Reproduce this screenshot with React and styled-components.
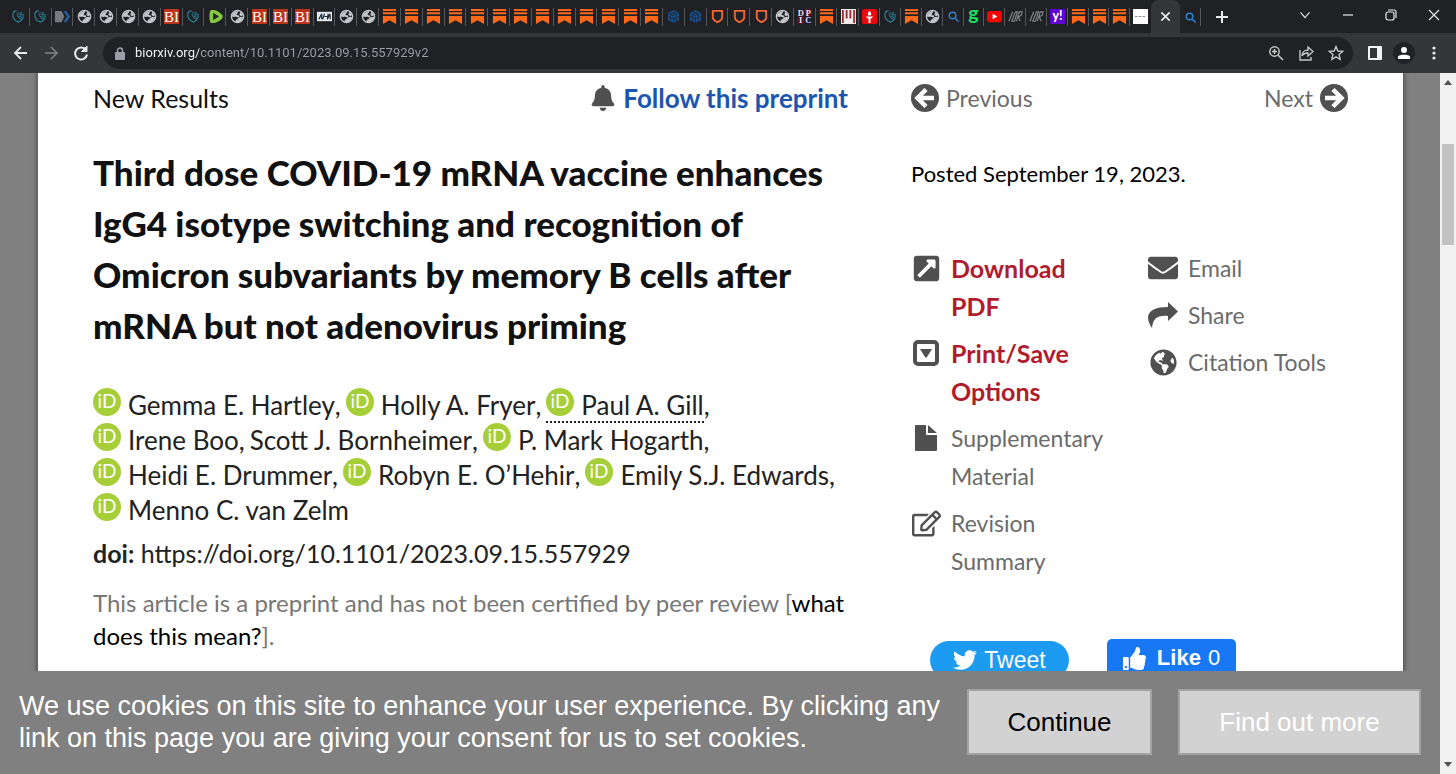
import React from "react";
import styled, { createGlobalStyle, css } from "styled-components";
import {
  FaBell,
  FaEnvelope,
  FaExternalLinkSquareAlt,
  FaGlobeAmericas,
  FaRegEdit,
  FaThumbsUp,
  FaTwitter,
} from "react-icons/fa";

const GlobalStyle = createGlobalStyle`
  * { box-sizing: border-box; }
  body { margin: 0; background: #808080; }
  button { font: inherit; border: 0; padding: 0; background: none; color: inherit; cursor: pointer; }
  a { color: inherit; text-decoration: none; }
  svg { display: block; flex: none; overflow: visible; }
`;

const humanist = `Lato, "Noto Sans", sans-serif`;
const grotesque = `"Liberation Sans", Arial, sans-serif`;

const Browser = styled.div`
  display: flex;
  flex-direction: column;
  height: 100vh;
  overflow: hidden;
  font-family: ${humanist};
`;

/* ---------- tab strip ---------- */

const TabStrip = styled.nav`
  display: flex;
  flex: none;
  height: 33px;
  padding-left: 8px;
  background: #202124;
`;

const Tab = styled.button`
  flex: ${(p) => (p.$narrow ? 21 : 22)} 1 0;
  min-width: 0;
  display: flex;
  align-items: center;
  justify-content: center;
  position: relative;
  ${(p) =>
    !p.$last &&
    css`
      &::after {
        content: "";
        position: absolute;
        right: 0;
        top: 8px;
        width: 1px;
        height: 18px;
        background: #55575b;
      }
    `}
`;

const StripEnd = styled.div`
  display: flex;
  flex: none;
  width: 305px;
`;

const ActiveTab = styled.button`
  display: flex;
  align-items: center;
  justify-content: center;
  width: 29px;
  border-radius: 8px 8px 0 0;
  background: #35363a;
`;

const StripButton = styled.button`
  display: flex;
  align-items: center;
  justify-content: center;
  width: ${(p) => p.$width}px;
  ${(p) => p.$divided && "border-right: 1px solid #55575b; height: 18px; margin-top: 8px;"}
`;

const WindowButtons = styled.div`
  display: flex;
  margin-left: auto;
  padding-bottom: 4px;
`;

/* ---------- toolbar ---------- */

const Toolbar = styled.div`
  display: flex;
  flex: none;
  align-items: center;
  height: 40px;
  padding: 0 11px 0 12px;
  background: #35363a;
`;

const NavButtons = styled.div`
  display: flex;
  gap: 12px;
  margin-right: 13px;
`;

const IconButton = styled.button`
  display: flex;
  align-items: center;
  justify-content: center;
  width: ${(p) => p.$width || 18}px;
  height: 24px;
`;

const AddressBar = styled.label`
  display: flex;
  align-items: center;
  flex: 1;
  gap: 10px;
  height: 32px;
  padding: 0 8px 0 12px;
  border-radius: 16px;
  background: #202124;
`;

const AddressInput = styled.input`
  flex: 1;
  min-width: 0;
  padding: 0;
  border: 0;
  outline: 0;
  font: 13px/20px Roboto, sans-serif;
  color: transparent;
  background: linear-gradient(to right, #fff 64px, #9aa0a6 64px);
  background-clip: text;
  -webkit-background-clip: text;
`;

const AddressActions = styled.div`
  display: flex;
  gap: 12px;
`;

const ToolbarActions = styled.div`
  display: flex;
  align-items: center;
  gap: 8px;
  margin-left: 12px;
`;

const Avatar = styled.button`
  display: flex;
  align-items: center;
  justify-content: center;
  width: 22px;
  height: 22px;
  border-radius: 50%;
  background: #202124;
`;

/* ---------- window content ---------- */

const Content = styled.div`
  display: flex;
  flex: 1;
  min-height: 0;
`;

const Document = styled.div`
  display: flex;
  flex-direction: column;
  flex: 1;
  min-width: 0;
  background: #808080;
`;

const PageArea = styled.div`
  flex: 1;
  min-height: 0;
  overflow: hidden;
  padding: 0 37px 0 38px;
`;

const Page = styled.main`
  display: grid;
  grid-template-columns: minmax(0, 763fr) minmax(0, 437fr);
  column-gap: 55px;
  min-height: 100%;
  padding: 0 55px;
  background: #fff;
  box-shadow: 0 0 5px 1px #4a4a4a;
`;

const Scrollbar = styled.div`
  display: flex;
  flex-direction: column;
  align-items: center;
  justify-content: space-between;
  flex: none;
  width: 16px;
  padding: 7px 0;
  background: #f1f1f1;
`;

const Thumb = styled.div`
  width: 12px;
  height: 101px;
  margin: 59px 0 auto;
  background: #c1c1c1;
`;

const TopRow = styled.div`
  display: flex;
  align-items: center;
  justify-content: space-between;
  height: 50px;
  font-size: ${(p) => (p.$muted ? 23 : 25)}px;
  line-height: 32px;
  color: ${(p) => (p.$muted ? "#6b6b6b" : "#111")};
`;

const TopLink = styled.a`
  display: flex;
  align-items: center;
  gap: 7px;
`;

const FollowLink = styled(TopLink)`
  margin-right: 8px;
  font-size: 26px;
  font-weight: 700;
  color: #1a56b0;
`;

const Title = styled.h1`
  margin: 24px 0 37px;
  font-size: 35px;
  line-height: 51px;
  font-weight: 900;
  white-space: nowrap;
  color: #111;
`;

const Authors = styled.div`
  font-size: 26px;
  line-height: 35px;
  white-space: nowrap;
  color: #222;
`;

const AuthorLine = styled.div`
  display: flex;
  gap: 5px;
  height: 35px;
`;

const AuthorEntry = styled.span`
  display: flex;
`;

const AuthorLink = styled.a`
  display: flex;
  gap: 7px;
  ${(p) => p.$dotted && "border-bottom: 2px dotted #222;"}
`;

const Doi = styled.div`
  margin-top: 8px;
  font-size: 25px;
  line-height: 35px;
  color: #222;
`;

const Notice = styled.p`
  margin: 15px 0 0;
  font-size: 24px;
  line-height: 33px;
  white-space: nowrap;
  color: #777;
`;

const NoticeLink = styled.a`
  color: #000;
`;

const Posted = styled.div`
  margin: 35px 0 59px;
  font-size: 22px;
  line-height: 32px;
  color: #000;
`;

const Tools = styled.div`
  display: grid;
  grid-template-columns: 237px minmax(0, 1fr);
`;

const ToolList = styled.ul`
  display: flex;
  flex-direction: column;
  gap: 9px;
  margin: 0;
  padding: 0;
  list-style: none;
`;

const ToolLink = styled.a`
  display: flex;
  gap: 10px;
  font-size: ${(p) => (p.$strong ? 25 : 23)}px;
  line-height: 38px;
  font-weight: ${(p) => (p.$strong ? 700 : 400)};
  color: ${(p) => (p.$strong ? "#b01c2e" : "#6b6b6b")};
`;

const ToolIcon = styled.span`
  display: flex;
  align-items: center;
  justify-content: center;
  flex: none;
  width: 30px;
  height: 38px;
  color: #505050;
`;

const Social = styled.div`
  display: flex;
  align-items: flex-start;
  gap: 38px;
  margin: 59px 0 0 19px;
  font-family: ${grotesque};
  font-size: 22px;
  color: #fff;
`;

const TweetButton = styled.button`
  display: flex;
  align-items: center;
  justify-content: center;
  gap: 7px;
  width: 139px;
  height: 38px;
  margin-top: 2px;
  border-radius: 19px;
  font-size: 23px;
  background: #1d9bf0;
`;

const LikeButton = styled.button`
  display: flex;
  align-items: center;
  justify-content: center;
  gap: 7px;
  width: 129px;
  height: 38px;
  border-radius: 5px;
  background: #1877f2;
`;

const LikeIcon = styled.span`
  margin-right: 4px;
`;

const CookieBar = styled.div`
  display: flex;
  align-items: flex-start;
  justify-content: space-between;
  flex: none;
  padding: 18px 19px 19px;
  font-family: ${grotesque};
  font-size: 26px;
  line-height: 32px;
  color: #fff;
  background: #808080;
`;

const CookieText = styled.p`
  margin: 1px 0 0;
  font-size: 27px;
  white-space: nowrap;
`;

const CookieButtons = styled.div`
  display: flex;
  gap: 26px;
`;

const CookieButton = styled.button`
  width: ${(p) => (p.$wide ? 243 : 185)}px;
  height: 66px;
  border: 2px solid #a3a3a3;
  color: ${(p) => (p.$wide ? "#fff" : "#000")};
  background: #d2d2d2;
`;

/* ---------- favicons ---------- */

const favicons = {
  teal: (
    <g fill="none" stroke="#2b8399" strokeWidth="1.200">
      <path d="M6 2C3 2 2 4 2 6c0 4 3 7 6 8 3-1 5-4 5-7" />
      <path d="M7 4h5M8 6h6M7 8h4M9 10h3M7 4c-1 2 0 4 2 6M11 3l-1 8" stroke="#236477" />
    </g>
  ),
  arrowTag: (
    <g>
      <path d="M0 2h7l3 6-3 6H0z" fill="#777b80" />
      <path d="M9 2h3l4 6-4 6H9l4-6z" fill="#2461a0" />
    </g>
  ),
  globe: (
    <g>
      <circle cx="8" cy="8" r="6.500" fill="#202124" stroke="#c3c6ca" strokeWidth="1.500" />
      <path d="M2 7c1-3 4-5 7-5 0 2-2 2-2 4 1 1 3 0 3 2-1 2-3 0-4 0C5 9 3 8 2 8zM6 14c0-2 0-3 2-3 1-2 2-3 6-2-.5 3-4 6-8 5zM11 3l3 3-2 2-2-2z" fill="#c3c6ca" />
    </g>
  ),
  bi: (
    <g>
      <rect width="16" height="16" fill="#bb3418" />
      <text x="8" y="14" textAnchor="middle" fontFamily="Liberation Serif" fontSize="16" fill="#fff">BI</text>
    </g>
  ),
  rumble: (
    <g>
      <path d="M3 1h4c3 1 6 3 8 5 1 1 1 3 0 4-2 2-5 4-8 5H3c-2-3-2-11 0-14z" fill="#85c742" />
      <path d="M6 5l5 3-5 3z" fill="#202124" stroke="#202124" strokeLinejoin="round" />
    </g>
  ),
  stripedBanner: (
    <g>
      <rect y="3" width="16" height="10" fill="#e4e9f0" />
      <path d="M2 11l3-6v6M8 5L6 11M8 8h4M12 5l-1 6 3-6M14 11V6" stroke="#1f2c3a" strokeWidth="1.300" fill="none" />
    </g>
  ),
  substack: <path d="M1 0h14v2H1zM1 3.500h14v2H1zM1 7.500h14V16l-7-4-7 4z" fill="#ff6719" />,
  cube: (
    <g>
      <path d="M8 1l6 3v8l-6 3-6-3V4z" fill="#15508f" />
      <path d="M2 4l6 3 6-3M8 7v8M5 2.500l6 3M11 2.500l-6 3M5 6v8M11 6v8M2 8l6 3 6-3" fill="none" stroke="#202b3c" strokeWidth="1" />
    </g>
  ),
  shield: <path d="M3 2h10v7c0 3-3 4-5 5-2-1-5-2-5-5z" fill="none" stroke="#ef6636" strokeWidth="2" />,
  dpic: (
    <g fontFamily="Liberation Serif" fontSize="9" fontWeight="700" textAnchor="middle">
      <rect width="8" height="8" fill="#16193c" />
      <rect x="8" width="8" height="8" fill="#5c1020" />
      <rect y="8" width="8" height="8" fill="#5c1020" />
      <rect x="8" y="8" width="8" height="8" fill="#16193c" />
      <text x="4" y="7" fill="#e8e8f4">D</text>
      <text x="12" y="7" fill="#e8e8f4">P</text>
      <text x="4" y="15" fill="#e8e8f4">I</text>
      <text x="12" y="15" fill="#e8e8f4">C</text>
    </g>
  ),
  columns: (
    <g>
      <rect width="16" height="16" fill="#f4ecec" />
      <path d="M2 1v14M6 1v9M10 1v9M14 1v14" stroke="#9b2f34" strokeWidth="2" />
    </g>
  ),
  torch: (
    <g>
      <rect width="16" height="16" rx="2" fill="#e8090c" />
      <path d="M8 2c2 2 2.500 3 1 5H7c-1.500-2-1-3 1-5zM4 8h8l-2 2H6zM7 10h2v5H7z" fill="#fff" />
    </g>
  ),
  search: (
    <g fill="none" stroke="#2f7fca" strokeWidth="1.600">
      <circle cx="7" cy="7" r="3.500" />
      <path d="M10 10l3.500 3.500" />
    </g>
  ),
  g: <text x="8" y="12" textAnchor="middle" fontFamily="Lato" fontWeight="900" fontSize="21" fill="#1fd760">g</text>,
  youtube: (
    <g>
      <rect y="2" width="16" height="12" rx="3" fill="#f00" />
      <path d="M6 5l5 3-5 3z" fill="#fff" />
    </g>
  ),
  dr: (
    <g fill="none" stroke="#84878a" strokeWidth="1.200">
      <path d="M1 13L5 3M4 13L8 3h2L7 13zM9 13l3-10h3l-1 4-3 1 2 5" />
    </g>
  ),
  yahoo: (
    <g>
      <rect width="16" height="16" fill="#5f01d1" />
      <text x="8" y="12" textAnchor="middle" fontFamily="Lato" fontWeight="900" fontSize="13" fill="#fff">y!</text>
    </g>
  ),
  blank: (
    <g>
      <rect width="16" height="16" fill="#fff" />
      <path d="M2 8h12" stroke="#8b8b8b" strokeDasharray="3 1" />
    </g>
  ),
};

const repeat = (name, count) => Array(count).fill(name);

const tabs = [
  "teal", "teal", "arrowTag",
  ...repeat("globe", 4),
  "bi", "teal", "rumble", "globe",
  ...repeat("bi", 3),
  "stripedBanner", "globe", "globe",
  ...repeat("substack", 13),
  "cube", "cube",
  ...repeat("shield", 3),
  "globe", "dpic", "substack", "columns",
  "torch", "teal", "substack", "globe", "search", "g", "youtube", "dr", "dr", "yahoo",
  ...repeat("substack", 3),
  "blank",
];

const Favicon = ({ name }) => (
  <svg width="15" height="15" viewBox="0 0 16 16" aria-hidden="true">
    {favicons[name]}
  </svg>
);

const Line = ({ size = 18, color = "#e8eaed", width = 2, d, children }) => (
  <svg width={size} height={size} viewBox="0 0 18 18" fill="none" stroke={color} strokeWidth={width} aria-hidden="true">
    {d && <path d={d} />}
    {children}
  </svg>
);

/* ---------- article icons ---------- */

const CircleArrow = ({ right }) => (
  <svg width="28" height="28" viewBox="0 0 28 28" aria-hidden="true">
    <g transform={right ? "translate(28 0) scale(-1 1)" : undefined}>
      <circle cx="14" cy="14" r="14" fill="#505050" />
      <path d="M15 5.500L6.500 14l8.500 8.500M8 14H23" fill="none" stroke="#fff" strokeWidth="4.500" />
    </g>
  </svg>
);

const ShareArrow = () => (
  <svg width="30" height="28" viewBox="0 0 30 28" aria-hidden="true">
    <path d="M20 1l10 9.500L20 20v-5C10 14 5 17 4 27 1 23 0 19 0 16 1 9 8 6 20 6z" fill="#505050" />
  </svg>
);

const CaretSquare = () => (
  <svg width="26" height="26" viewBox="0 0 26 26" aria-hidden="true">
    <rect x="2" y="2" width="22" height="22" rx="3" fill="none" stroke="#505050" strokeWidth="4" />
    <path d="M7 9h12l-5 8q-1 1-2 0z" fill="#505050" />
  </svg>
);

const FoldedFile = () => (
  <svg width="22" height="26" viewBox="0 0 22 26" fill="#505050" aria-hidden="true">
    <path d="M1 0h10v10h11v15q0 1-1 1H1q-1 0-1-1V1q0-1 1-1z" />
    <path d="M13 0l9 8h-9z" />
  </svg>
);

const OrcidMark = () => (
  <svg width="28" height="28" viewBox="0 0 28 28" role="img" aria-label="ORCID">
    <circle cx="14" cy="14" r="14" fill="#a6ce39" />
    <text x="14" y="20" textAnchor="middle" fontFamily="Lato" fontSize="19" fill="#fff">iD</text>
  </svg>
);

const authorLines = [
  [
    { name: "Gemma E. Hartley", orcid: true },
    { name: "Holly A. Fryer", orcid: true },
    { name: "Paul A. Gill", orcid: true, dotted: true },
  ],
  [
    { name: "Irene Boo", orcid: true },
    { name: "Scott J. Bornheimer" },
    { name: "P. Mark Hogarth", orcid: true },
  ],
  [
    { name: "Heidi E. Drummer", orcid: true },
    { name: "Robyn E. O’Hehir", orcid: true },
    { name: "Emily S.J. Edwards", orcid: true },
  ],
  [{ name: "Menno C. van Zelm", orcid: true, last: true }],
];

const primaryTools = [
  { lines: ["Download", "PDF"], icon: <FaExternalLinkSquareAlt size={29} />, strong: true },
  { lines: ["Print/Save", "Options"], icon: <CaretSquare />, strong: true },
  { lines: ["Supplementary", "Material"], icon: <FoldedFile /> },
  { lines: ["Revision", "Summary"], icon: <FaRegEdit size={29} /> },
];

const secondaryTools = [
  { lines: ["Email"], icon: <FaEnvelope size={30} /> },
  { lines: ["Share"], icon: <ShareArrow /> },
  { lines: ["Citation Tools"], icon: <FaGlobeAmericas size={27} /> },
];

const ToolColumn = ({ items }) => (
  <ToolList>
    {items.map((item) => (
      <li key={item.lines[0]}>
        <ToolLink href="#" $strong={item.strong}>
          <ToolIcon>{item.icon}</ToolIcon>
          <span>
            {item.lines[0]}
            {item.lines[1] && <><br />{item.lines[1]}</>}
          </span>
        </ToolLink>
      </li>
    ))}
  </ToolList>
);

export default function App() {
  return (
    <Browser>
      <GlobalStyle />
      <TabStrip aria-label="Tabs">
        {tabs.map((name, i) => (
          <Tab key={i} $narrow={i >= 39} $last={i === tabs.length - 1} aria-label={`Tab ${i + 1}`}>
            <Favicon name={name} />
          </Tab>
        ))}
        <StripEnd>
          <ActiveTab aria-label="Close tab">
            <Line size={15} d="M4 4l10 10M14 4L4 14" />
          </ActiveTab>
          <StripButton $width={21} $divided aria-label="Search tab"><Favicon name="search" /></StripButton>
          <StripButton $width={42} aria-label="New tab"><Line d="M9 3v12M3 9h12" /></StripButton>
          <WindowButtons>
            <StripButton $width={43} aria-label="Search tabs"><Line size={16} width={1.2} d="M4 6l5 6 5-6" /></StripButton>
            <StripButton $width={43} aria-label="Minimize"><Line width={1.2} d="M4 9h10" /></StripButton>
            <StripButton $width={43} aria-label="Restore">
              <Line width={1.2}><rect x="4" y="6" width="8" height="8" rx="2" /><path d="M6 4h6q2 0 2 2v6" /></Line>
            </StripButton>
            <StripButton $width={44} aria-label="Close"><Line width={1.2} d="M4 4l10 10M14 4L4 14" /></StripButton>
          </WindowButtons>
        </StripEnd>
      </TabStrip>

      <Toolbar>
        <NavButtons>
          <IconButton aria-label="Back"><Line d="M15 9H4M9 3L3 9l6 6" width={1.8} /></IconButton>
          <IconButton aria-label="Forward"><Line color="#7d8084" d="M3 9h11M9 3l6 6-6 6" width={1.6} /></IconButton>
          <IconButton aria-label="Reload">
            <Line><path d="M14 6A6 6 0 1 0 15 10.500" /><path d="M15 2v5.500h-5.500z" fill="#e8eaed" strokeWidth="1" /></Line>
          </IconButton>
        </NavButtons>
        <AddressBar>
          <svg width="10" height="13" viewBox="0 0 10 13" aria-hidden="true">
            <rect y="5" width="10" height="8" rx="1" fill="#9aa0a6" />
            <path d="M2.500 5V3.500a2.500 2.500 0 0 1 5 0V5" fill="none" stroke="#9aa0a6" strokeWidth="1.500" />
          </svg>
          <AddressInput aria-label="Address" defaultValue="biorxiv.org/content/10.1101/2023.09.15.557929v2" />
          <AddressActions>
            <IconButton aria-label="Zoom">
              <Line color="#c4c7c5" width={1.5}><circle cx="7.500" cy="7.500" r="4.700" /><path d="M11 11l5 5M5 7.500h5M7.500 5v5" /></Line>
            </IconButton>
            <IconButton aria-label="Share">
              <Line color="#c4c7c5" width={1.4} d="M3 6v10h11v-3M5 12c0-4 3-6 6-6V3l5 4.500-5 4.500V9c-3 0-5 1-6 3z" />
            </IconButton>
            <IconButton aria-label="Bookmark">
              <Line color="#c4c7c5" width={1.4} d="M9 2.500l1.900 4.500 4.800.4-3.600 3.200 1.100 4.700L9 12.800l-4.200 2.500 1.100-4.700-3.600-3.200 4.800-.4z" />
            </IconButton>
          </AddressActions>
        </AddressBar>
        <ToolbarActions>
          <IconButton $width={20} aria-label="Side panel">
            <svg width="14" height="14" viewBox="0 0 14 14" aria-hidden="true">
              <rect width="14" height="14" rx="1" fill="#f1f3f4" />
              <rect x="2" y="2" width="7" height="10" fill="#35363a" />
            </svg>
          </IconButton>
          <Avatar aria-label="Profile">
            <svg width="12" height="12" viewBox="0 0 12 12" fill="#fff" aria-hidden="true">
              <circle cx="6" cy="3" r="3" />
              <path d="M0 12V9.500C1 7 11 7 12 9.500V12z" />
            </svg>
          </Avatar>
          <IconButton $width={22} aria-label="Menu">
            <svg width="4" height="14" viewBox="0 0 4 14" fill="#e8eaed" aria-hidden="true">
              <circle cx="2" cy="2" r="1.600" /><circle cx="2" cy="7" r="1.600" /><circle cx="2" cy="12" r="1.600" />
            </svg>
          </IconButton>
        </ToolbarActions>
      </Toolbar>

      <Content>
        <Document>
          <PageArea>
            <Page>
              <article>
                <TopRow>
                  <span>New Results</span>
                  <FollowLink href="#"><FaBell size={26} color="#505050" />Follow this preprint</FollowLink>
                </TopRow>
                <Title>
                  Third dose COVID-19 mRNA vaccine enhances<br />
                  IgG4 isotype switching and recognition of<br />
                  Omicron subvariants by memory B cells after<br />
                  mRNA but not adenovirus priming
                </Title>
                <Authors>
                  {authorLines.map((line, i) => (
                    <AuthorLine key={i}>
                      {line.map((author) => (
                        <AuthorEntry key={author.name}>
                          <AuthorLink href="#" $dotted={author.dotted}>
                            {author.orcid && <OrcidMark />}
                            <span>{author.name}</span>
                          </AuthorLink>
                          {!author.last && ","}
                        </AuthorEntry>
                      ))}
                    </AuthorLine>
                  ))}
                </Authors>
                <Doi><b>doi:</b> https://doi.org/10.1101/2023.09.15.557929</Doi>
                <Notice>
                  This article is a preprint and has not been certified by peer review [<NoticeLink href="#">what<br />
                  does this mean?</NoticeLink>].
                </Notice>
              </article>

              <aside>
                <TopRow $muted>
                  <TopLink href="#"><CircleArrow />Previous</TopLink>
                  <TopLink href="#">Next<CircleArrow right /></TopLink>
                </TopRow>
                <Posted>Posted September 19, 2023.</Posted>
                <Tools>
                  <ToolColumn items={primaryTools} />
                  <ToolColumn items={secondaryTools} />
                </Tools>
                <Social>
                  <TweetButton><FaTwitter size={24} />Tweet</TweetButton>
                  <LikeButton><LikeIcon><FaThumbsUp size={23} /></LikeIcon><b>Like</b>0</LikeButton>
                </Social>
              </aside>
            </Page>
          </PageArea>
          <CookieBar>
            <CookieText>
              We use cookies on this site to enhance your user experience. By clicking any<br />
              link on this page you are giving your consent for us to set cookies.
            </CookieText>
            <CookieButtons>
              <CookieButton>Continue</CookieButton>
              <CookieButton $wide>Find out more</CookieButton>
            </CookieButtons>
          </CookieBar>
        </Document>
        <Scrollbar>
          <svg width="8" height="5" viewBox="0 0 8 5" aria-hidden="true"><path d="M0 5l4-5 4 5z" fill="#505050" /></svg>
          <Thumb />
          <svg width="8" height="5" viewBox="0 0 8 5" aria-hidden="true"><path d="M0 0l4 5 4-5z" fill="#505050" /></svg>
        </Scrollbar>
      </Content>
    </Browser>
  );
}
